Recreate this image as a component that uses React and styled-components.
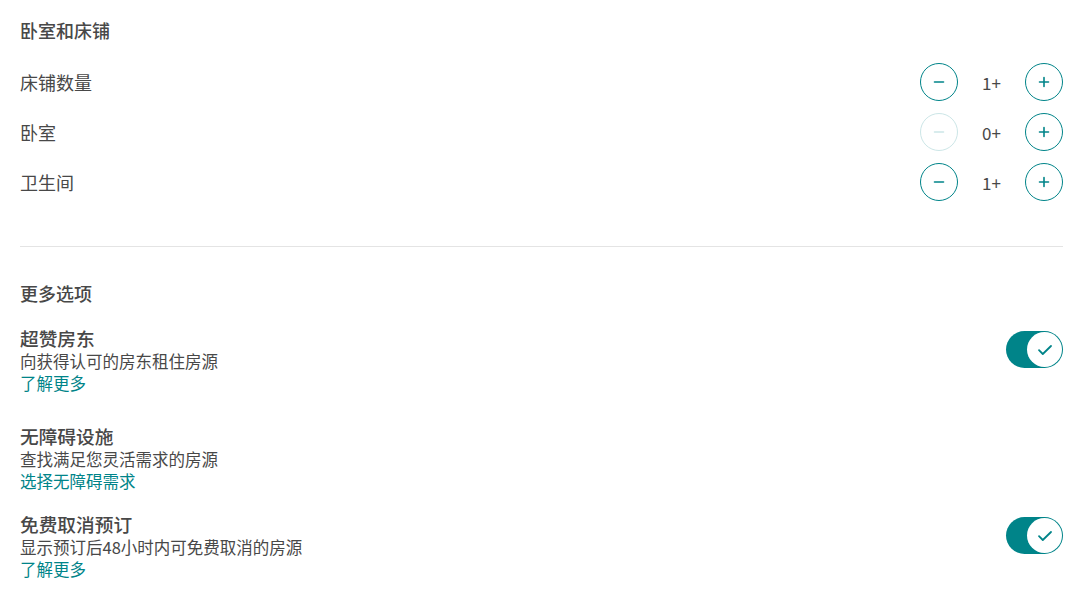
import styled, { createGlobalStyle } from "styled-components";

const GlobalStyle = createGlobalStyle`
  body {
    margin: 0;
    background: #ffffff;
    font-family: "Noto Sans CJK SC", "Noto Sans", sans-serif;
    color: #484848;
  }
`;

const TEAL = "#008489";

const Page = styled.div`
  width: 1080px;
  padding: 18px 17px 0 20px;
  box-sizing: border-box;
`;

const SectionTitle = styled.h2`
  margin: 0;
  font-size: 18px;
  line-height: 24px;
  font-weight: 500;
  color: #484848;
`;

const CounterList = styled.div`
  display: flex;
  flex-direction: column;
  margin-top: 15px;
`;

const CounterRow = styled.div`
  display: flex;
  align-items: center;
  justify-content: space-between;
  height: 50px;
`;

const CounterLabel = styled.span`
  font-size: 18px;
  color: #484848;
`;

const Stepper = styled.div`
  display: flex;
  align-items: center;
`;

const RoundButton = styled.button`
  width: 38px;
  height: 38px;
  border-radius: 50%;
  border: 1.5px solid ${(p) => (p.disabled ? "#cce6e7" : TEAL)};
  background: #fff;
  padding: 0;
  display: flex;
  align-items: center;
  justify-content: center;
  color: ${(p) => (p.disabled ? "#cce6e7" : TEAL)};
  cursor: ${(p) => (p.disabled ? "default" : "pointer")};
`;

const Count = styled.span`
  width: 67px;
  text-align: center;
  font-size: 17px;
  color: #484848;
`;

const Divider = styled.hr`
  border: none;
  border-top: 1.5px solid #e4e4e4;
  margin: 39px 0 34px;
`;

const OptionList = styled.div`
  display: flex;
  flex-direction: column;
  margin-top: 21px;
`;

const Option = styled.div`
  display: flex;
  justify-content: space-between;
  align-items: flex-start;
  margin-top: ${(p) => p.gap}px;
`;

const OptionText = styled.div`
  display: flex;
  flex-direction: column;
`;

const OptionTitle = styled.span`
  font-size: 18.7px;
  line-height: 24px;
  font-weight: 500;
  color: #484848;
`;

const OptionDesc = styled.span`
  font-size: 16.5px;
  line-height: 22px;
  color: #484848;
`;

const OptionLink = styled.a`
  font-size: 16.5px;
  line-height: 22px;
  color: ${TEAL};
  text-decoration: none;
  cursor: pointer;
`;

const Toggle = styled.button`
  width: 57px;
  height: 37px;
  margin-top: 5px;
  border-radius: 19px;
  border: none;
  padding: 0;
  background: ${TEAL};
  display: flex;
  align-items: center;
  justify-content: flex-end;
  cursor: pointer;
`;

const Thumb = styled.span`
  width: 35px;
  height: 35px;
  margin-right: 1px;
  border-radius: 50%;
  background: #fff;
  display: flex;
  align-items: center;
  justify-content: center;
`;

function Minus() {
  return (
    <svg width="12" height="12" viewBox="0 0 12 12">
      <path d="M1.5 6h9" stroke="currentColor" strokeWidth="1.6" strokeLinecap="round" />
    </svg>
  );
}

function Plus() {
  return (
    <svg width="12" height="12" viewBox="0 0 12 12">
      <path d="M1.5 6h9M6 1.5v9" stroke="currentColor" strokeWidth="1.6" strokeLinecap="round" />
    </svg>
  );
}

function Check() {
  return (
    <svg width="16" height="12" viewBox="0 0 16 12">
      <path
        d="M2 6.2l3.8 3.8L14 2"
        fill="none"
        stroke={TEAL}
        strokeWidth="1.8"
        strokeLinecap="round"
        strokeLinejoin="round"
      />
    </svg>
  );
}

const counters = [
  { label: "床铺数量", value: "1+", min: false },
  { label: "卧室", value: "0+", min: true },
  { label: "卫生间", value: "1+", min: false },
];

const options = [
  { title: "超赞房东", desc: "向获得认可的房东租住房源", link: "了解更多", toggle: true, gap: 0 },
  { title: "无障碍设施", desc: "查找满足您灵活需求的房源", link: "选择无障碍需求", toggle: false, gap: 30 },
  { title: "免费取消预订", desc: "显示预订后48小时内可免费取消的房源", link: "了解更多", toggle: true, gap: 20 },
];

export default function App() {
  return (
    <>
      <GlobalStyle />
      <Page>
        <SectionTitle>卧室和床铺</SectionTitle>
        <CounterList>
          {counters.map((c) => (
            <CounterRow key={c.label}>
              <CounterLabel>{c.label}</CounterLabel>
              <Stepper>
                <RoundButton disabled={c.min}>
                  <Minus />
                </RoundButton>
                <Count>{c.value}</Count>
                <RoundButton>
                  <Plus />
                </RoundButton>
              </Stepper>
            </CounterRow>
          ))}
        </CounterList>
        <Divider />
        <SectionTitle>更多选项</SectionTitle>
        <OptionList>
          {options.map((o) => (
            <Option key={o.title} gap={o.gap}>
              <OptionText>
                <OptionTitle>{o.title}</OptionTitle>
                <OptionDesc>{o.desc}</OptionDesc>
                <OptionLink>{o.link}</OptionLink>
              </OptionText>
              {o.toggle && (
                <Toggle>
                  <Thumb>
                    <Check />
                  </Thumb>
                </Toggle>
              )}
            </Option>
          ))}
        </OptionList>
      </Page>
    </>
  );
}
